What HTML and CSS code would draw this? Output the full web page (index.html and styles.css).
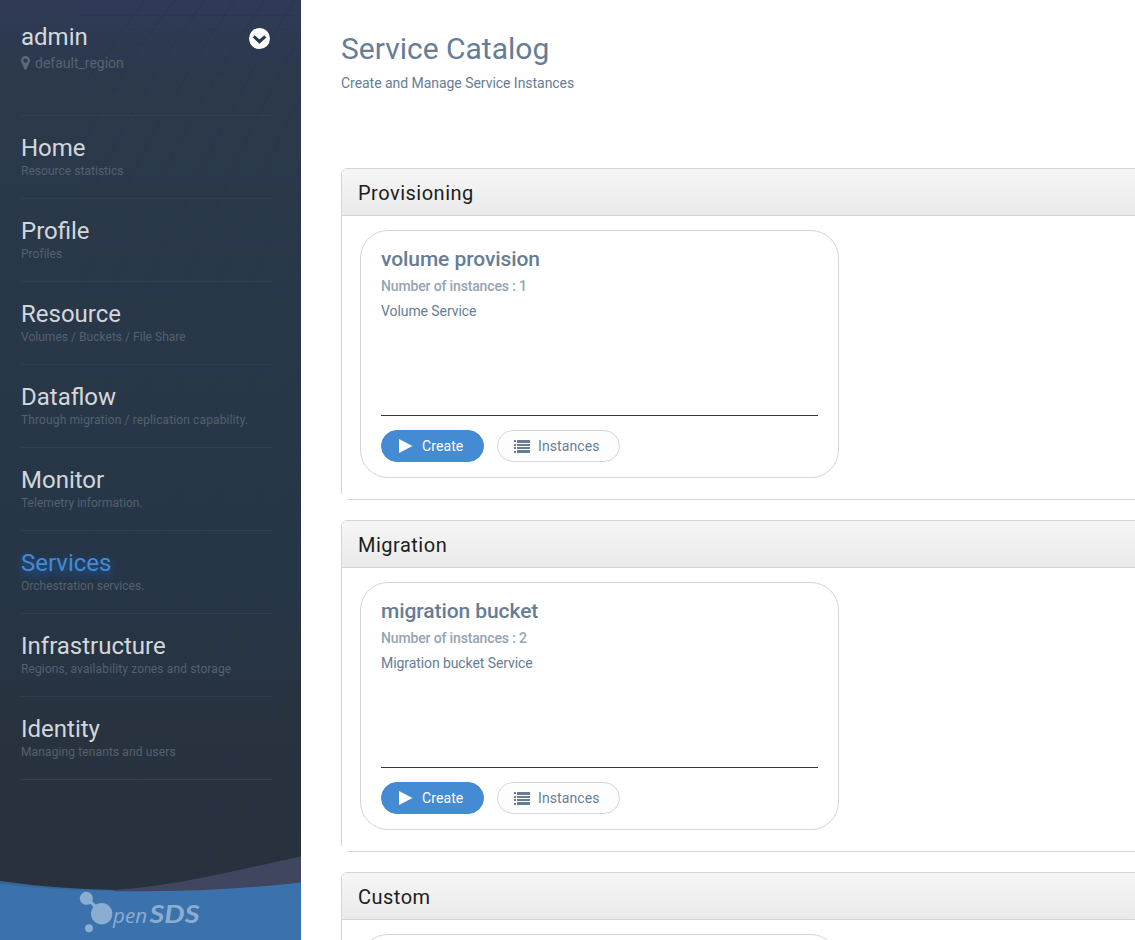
FILE: index.html
```html
<!DOCTYPE html>
<html lang="en">
<head>
<meta charset="utf-8">
<title>Service Catalog</title>
<link rel="stylesheet" href="styles.css">
</head>
<body>
<div class="app">
  <aside class="sidebar">
    <svg class="mesh" width="301" height="940" viewBox="0 0 301 940" aria-hidden="true">
      <g id="mesh-lines" fill="none" stroke="#302f60" stroke-opacity=".32">
        <path d="M80 15.500H301M80 29.500H301M80 43.500H301M80 57.500H301M80 72.500H301M80 88.500H301M80 104.500H301M80 121.500H301M80 139.500H301M80 157.500H301M80 176.500H301M80 197.500H301M80 218.500H301M80 240.500H301M80 264.500H301M80 288.500H301M80 313.500H301M80 340.500H301M80 368.500H301M80 398.500H301M80 430.500H301M80 463.500H301M80 498.500H301M80 535.500H301M80 574.500H301M80 617.500H301M80 662.500H301M80 710.500H301M80 762.500H301"/>
        <path stroke-width="1.300" d="M145 0L80 90M175 0Q120 70 80 150M205 0Q130 100 80 220M235 0Q145 130 80 290M265 0Q160 150 80 370M295 0Q180 180 80 460M301 35Q200 210 80 570M301 95Q210 270 80 690M301 165Q220 340 90 780M301 245Q240 400 115 860M301 335Q260 480 165 890M301 450Q270 560 205 880M301 590Q280 680 240 870"/>
      </g>
    </svg>
    <header class="user">
      <div class="user-row">
        <span class="user-name">admin</span>
        <svg class="chevron" width="22" height="22" viewBox="0 0 22 22"><circle cx="10.500" cy="11.500" r="10.500" fill="#fff"/><path d="M4.700 9.400L10.500 14.600L16.300 9.400" fill="none" stroke="#2b394d" stroke-width="3.200"/></svg>
      </div>
      <div class="region">
        <svg width="9" height="14" viewBox="0 0 9 14"><path fill="#5c6877" fill-rule="evenodd" d="M4.500 0A4.500 4.500 0 0 0 0 4.500C0 6.500 2.200 9.500 3.200 13Q4.500 14.500 5.800 13C6.800 9.500 9 6.500 9 4.500A4.500 4.500 0 0 0 4.500 0ZM4.500 2.400A2.200 2.200 0 1 1 4.500 6.800A2.200 2.200 0 0 1 4.500 2.400Z"/></svg>
        <span>default_region</span>
      </div>
    </header>
    <nav class="menu">
      <a class="item"><b>Home</b><small>Resource statistics</small></a>
      <a class="item"><b>Profile</b><small>Profiles</small></a>
      <a class="item"><b>Resource</b><small>Volumes / Buckets / File Share</small></a>
      <a class="item"><b>Dataflow</b><small class="wide">Through migration / replication capability.</small></a>
      <a class="item"><b>Monitor</b><small>Telemetry information.</small></a>
      <a class="item active"><b>Services</b><small>Orchestration services.</small></a>
      <a class="item"><b>Infrastructure</b><small class="wide">Regions, availability zones and storage</small></a>
      <a class="item"><b>Identity</b><small class="wide">Managing tenants and users</small></a>
    </nav>
    <svg class="brand" width="301" height="90" viewBox="0 850 301 90">
      <path fill="#40465f" d="M301 856.500C240 869 175 887 110 890L150 900H301Z"/>
      <path fill="#376798" d="M0 881Q55 889 115 890L100 896L0 890Z"/>
      <path fill="#3b72ae" d="M0 884C90 894 200 894 301 882.500V940H0Z"/>
      <g fill="#8badd2">
        <circle cx="86.300" cy="898.300" r="6.500"/><circle cx="101.700" cy="913.800" r="10.700"/><circle cx="89" cy="928.200" r="4"/>
        <path d="M89 903L92 900Q94 905 99 905L94 910Q93 905 89 903Z"/>
        <text class="logo-thin" x="113" y="923" textLength="34" lengthAdjust="spacingAndGlyphs">pen</text>
        <text class="logo-bold" x="149.500" y="923" textLength="50" lengthAdjust="spacingAndGlyphs">SDS</text>
      </g>
    </svg>
  </aside>
  <main class="content">
    <h1>Service Catalog</h1>
    <p class="intro">Create and Manage Service Instances</p>
    <section class="panel">
      <h2>Provisioning</h2>
      <div class="panel-body">
        <article class="card">
          <h3>volume provision</h3>
          <p class="count">Number of instances : 1</p>
          <p class="desc">Volume Service</p>
          <div class="actions">
            <button class="btn create"><svg width="14" height="14" viewBox="0 0 14 14"><path fill="#fff" d="M0 0L13.500 7L0 14Z"/></svg>Create</button>
            <button class="btn list"><svg width="16" height="13" viewBox="0 0 16 13"><path fill="#667d95" d="M0 0h2v2H0zM3 0h13v3H3zM0 4h2v2H0zM3 4h13v2H3zM0 7h2v2H0zM3 7h13v2H3zM0 11h2v2H0zM3 10h13v3H3z"/></svg>Instances</button>
          </div>
        </article>
      </div>
    </section>
    <section class="panel">
      <h2>Migration</h2>
      <div class="panel-body">
        <article class="card">
          <h3>migration bucket</h3>
          <p class="count">Number of instances : 2</p>
          <p class="desc">Migration bucket Service</p>
          <div class="actions">
            <button class="btn create"><svg width="14" height="14" viewBox="0 0 14 14"><path fill="#fff" d="M0 0L13.500 7L0 14Z"/></svg>Create</button>
            <button class="btn list"><svg width="16" height="13" viewBox="0 0 16 13"><path fill="#667d95" d="M0 0h2v2H0zM3 0h13v3H3zM0 4h2v2H0zM3 4h13v2H3zM0 7h2v2H0zM3 7h13v2H3zM0 11h2v2H0zM3 10h13v3H3z"/></svg>Instances</button>
          </div>
        </article>
      </div>
    </section>
    <section class="panel">
      <h2>Custom</h2>
      <div class="panel-body"><article class="card"></article></div>
    </section>
  </main>
</div>
</body>
</html>
```
FILE: styles.css
```css
* { box-sizing: border-box; }
body { margin: 0; font-family: Roboto, sans-serif; font-size: 14px; color: #667d95; background: #fff; overflow: hidden; }
h1, h2, h3, p { margin: 0; font-weight: 400; }
.app { display: flex; height: 940px; overflow: hidden; }
.sidebar { position: relative; flex: 0 0 301px; display: flex; flex-direction: column; background: linear-gradient(#303a57 0, #2b394b 75px, #293849 300px, #263647 560px, #28333f 720px, #27323e 860px); }
.mesh { position: absolute; top: 0; left: 0; }
.user { position: relative; height: 115px; padding: 22px 30px 0 21px; color: #d5d9de; }
.user-row { display: flex; justify-content: space-between; height: 32px; }
.user-name { font-size: 24px; line-height: 30px; }
.chevron { margin-top: 5px; }
.region { display: flex; align-items: center; gap: 5px; height: 18px; color: #566372; }
.menu { position: relative; margin: 0 29px 0 21px; border-bottom: 1px solid #30404f; }
.item { display: block; height: 83px; border-top: 1px solid #30404f; padding-top: 17px; white-space: nowrap; }
.item b { display: block; font-weight: 400; font-size: 24px; line-height: 30px; color: #d2d7dc; }
.item small { display: block; font-size: 12px; line-height: 16px; letter-spacing: .03px; color: #536170; }
.item small.wide { letter-spacing: .12px; }
.item.active b { color: #448bd3; text-shadow: 0 4px 10px #1b62b5; }
.brand { position: relative; display: block; margin-top: auto; }
.logo-thin { font: italic 20px "Open Sans", sans-serif; }
.logo-bold { font: italic bold 25px Lato, sans-serif; }
.content { flex: 1; min-width: 0; padding: 29px 0 0 40px; overflow: hidden; }
h1 { font-size: 30px; line-height: 40px; }
.intro { line-height: 20px; margin-top: 4px; margin-bottom: 75px; letter-spacing: -.04px; }
.panel { position: relative; width: 900px; height: 332px; margin-bottom: 20px; border: 1px solid #d5d5d5; border-radius: 6px; }
.panel::after { content: ""; position: absolute; left: -1px; bottom: -1px; width: 6px; height: 6px; background: #fff; }
h2 { height: 47px; padding-left: 16px; font-size: 20px; line-height: 48px; letter-spacing: .5px; color: #1b1d1f; background: linear-gradient(#f6f6f6, #eaeaea); border-bottom: 1px solid #d5d5d5; border-radius: 5px 5px 0 0; }
.panel-body { padding: 14px 18px; }
.card { display: flex; flex-direction: column; width: 479px; height: 248px; padding: 14px 20px 15px; border: 1px solid #d5d5d5; border-radius: 28px; }
h3 { font-size: 21px; line-height: 28px; font-weight: 500; letter-spacing: -.08px; }
.count { margin-top: 3px; line-height: 20px; font-weight: 500; color: #94a4b5; letter-spacing: -.15px; }
.desc { margin-top: 5px; line-height: 20px; letter-spacing: -.08px; }
.actions { display: flex; gap: 13px; margin-top: auto; padding-top: 14px; border-top: 1px solid #393939; }
.btn { display: flex; align-items: center; height: 32px; font: 14px Roboto, sans-serif; letter-spacing: .1px; border-radius: 16px; border: 1px solid #d2d6dd; background: #fdfdfd; color: #667d95; }
.create { width: 103px; padding: 0 0 0 17px; gap: 9px; background: #448bd3; border-color: #448bd3; color: #fff; }
.list { width: 123px; padding: 0 0 0 16px; gap: 8px; }
```
